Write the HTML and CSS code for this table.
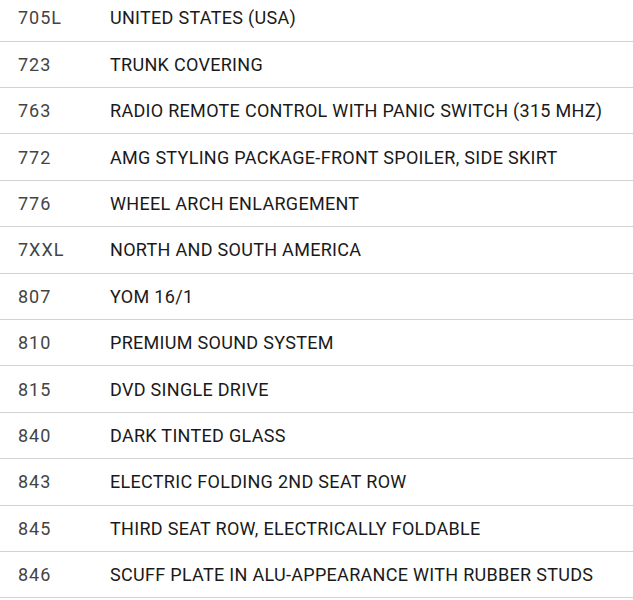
FILE: index.html
```html
<!DOCTYPE html>
<html>
<head>
<meta charset="utf-8">
<link rel="stylesheet" href="styles.css">
</head>
<body>
<div class="list">
  <div class="row first"><span class="code">705L</span><span class="desc">UNITED STATES (USA)</span></div>
  <div class="row"><span class="code">723</span><span class="desc">TRUNK COVERING</span></div>
  <div class="row"><span class="code">763</span><span class="desc">RADIO REMOTE CONTROL WITH PANIC SWITCH (315 MHZ)</span></div>
  <div class="row"><span class="code">772</span><span class="desc">AMG STYLING PACKAGE-FRONT SPOILER, SIDE SKIRT</span></div>
  <div class="row"><span class="code">776</span><span class="desc">WHEEL ARCH ENLARGEMENT</span></div>
  <div class="row"><span class="code">7XXL</span><span class="desc">NORTH AND SOUTH AMERICA</span></div>
  <div class="row"><span class="code">807</span><span class="desc">YOM 16/1</span></div>
  <div class="row"><span class="code">810</span><span class="desc">PREMIUM SOUND SYSTEM</span></div>
  <div class="row"><span class="code">815</span><span class="desc">DVD SINGLE DRIVE</span></div>
  <div class="row"><span class="code">840</span><span class="desc">DARK TINTED GLASS</span></div>
  <div class="row"><span class="code">843</span><span class="desc">ELECTRIC FOLDING 2ND SEAT ROW</span></div>
  <div class="row"><span class="code">845</span><span class="desc">THIRD SEAT ROW, ELECTRICALLY FOLDABLE</span></div>
  <div class="row"><span class="code">846</span><span class="desc">SCUFF PLATE IN ALU-APPEARANCE WITH RUBBER STUDS</span></div>
</div>
</body>
</html>
```
FILE: styles.css
```css
html, body {
  margin: 0;
  padding: 0;
  background: #fff;
}
.list {
  width: 633px;
  font-family: Roboto, "Liberation Sans", sans-serif;
  font-size: 18px;
}
.row {
  display: flex;
  align-items: center;
  height: 45.4px;
  border-bottom: 1px solid #d2d2d2;
}
.row.first {
  height: 40.6px;
  align-items: flex-end;
}
.row.first .code, .row.first .desc {
  padding-bottom: 13px;
}
.code {
  width: 92px;
  padding-left: 18px;
  color: #444;
  letter-spacing: 1px;
  flex: none;
}
.desc {
  color: #1a1a1a;
  letter-spacing: 0.3px;
}
```
